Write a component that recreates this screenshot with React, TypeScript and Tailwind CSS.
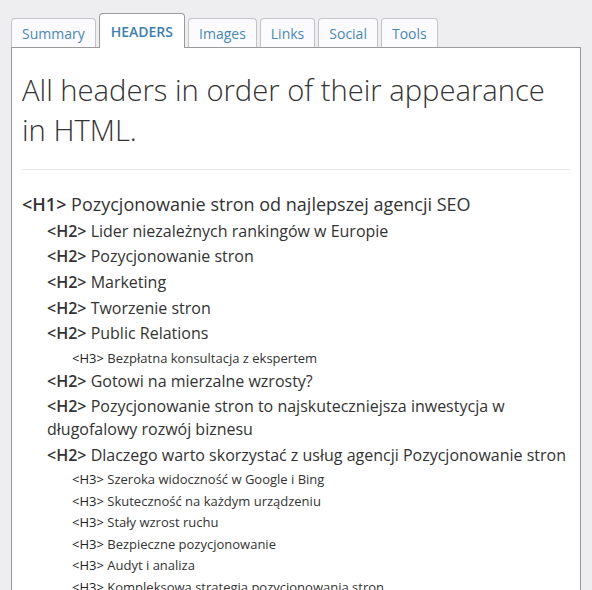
const TABS = ["Summary", "HEADERS", "Images", "Links", "Social", "Tools"];

type Header = { level: 1 | 2 | 3; text: string };

const HEADERS: Header[] = [
  { level: 1, text: "Pozycjonowanie stron od najlepszej agencji SEO" },
  { level: 2, text: "Lider niezależnych rankingów w Europie" },
  { level: 2, text: "Pozycjonowanie stron" },
  { level: 2, text: "Marketing" },
  { level: 2, text: "Tworzenie stron" },
  { level: 2, text: "Public Relations" },
  { level: 3, text: "Bezpłatna konsultacja z ekspertem" },
  { level: 2, text: "Gotowi na mierzalne wzrosty?" },
  { level: 2, text: "Pozycjonowanie stron to najskuteczniejsza inwestycja w długofalowy rozwój biznesu" },
  { level: 2, text: "Dlaczego warto skorzystać z usług agencji Pozycjonowanie stron" },
  { level: 3, text: "Szeroka widoczność w Google i Bing" },
  { level: 3, text: "Skuteczność na każdym urządzeniu" },
  { level: 3, text: "Stały wzrost ruchu" },
  { level: 3, text: "Bezpieczne pozycjonowanie" },
  { level: 3, text: "Audyt i analiza" },
  { level: 3, text: "Kompleksowa strategia pozycjonowania stron" },
];

const ROW_STYLE: Record<number, string> = {
  1: "text-[18px] leading-[26px] py-[1.2px]",
  2: "pl-[25px] text-[16px] leading-[23px] py-[1.35px]",
  3: "pl-[50px] text-[13px] leading-[18px] py-[1.75px]",
};

export default function App() {
  return (
    <div className="min-h-[590px] bg-[#eeedf0] px-[11px] pt-[13px] font-['Open_Sans',sans-serif] text-[#333]">
      <div className="flex items-end gap-[3px]">
        {TABS.map((t) =>
          t === "HEADERS" ? (
            <div
              key={t}
              className="relative -mb-px flex h-[35px] items-center rounded-t-[4px] border border-b-0 border-[#9a9a9a] bg-white px-[11px] text-[14px] font-semibold text-[#3f7fb0]"
            >
              {t}
            </div>
          ) : (
            <div
              key={t}
              className="flex h-[29px] items-center rounded-t-[4px] border border-b-0 border-[#c4c4c8] bg-[#fbfbfd] px-[10px] text-[14px] text-[#4a88b8]"
            >
              {t}
            </div>
          )
        )}
      </div>
      <div className="h-[560px] border border-[#9a9a9a] bg-white px-[10px] pt-[22px]">
        <h1 className="text-[29.2px] font-light leading-[40px] text-[#333]">
          All headers in order of their appearance in HTML.
        </h1>
        <hr className="mt-[19px] mb-[20px] border-t border-[#e8e8e8]" />
        <ul>
          {HEADERS.map((h, i) => (
            <li key={i} className={ROW_STYLE[h.level]}>
              <span className={h.level === 3 ? "text-[#222]" : "font-semibold"}>&lt;H{h.level}&gt;</span> {h.text}
            </li>
          ))}
        </ul>
      </div>
    </div>
  );
}
